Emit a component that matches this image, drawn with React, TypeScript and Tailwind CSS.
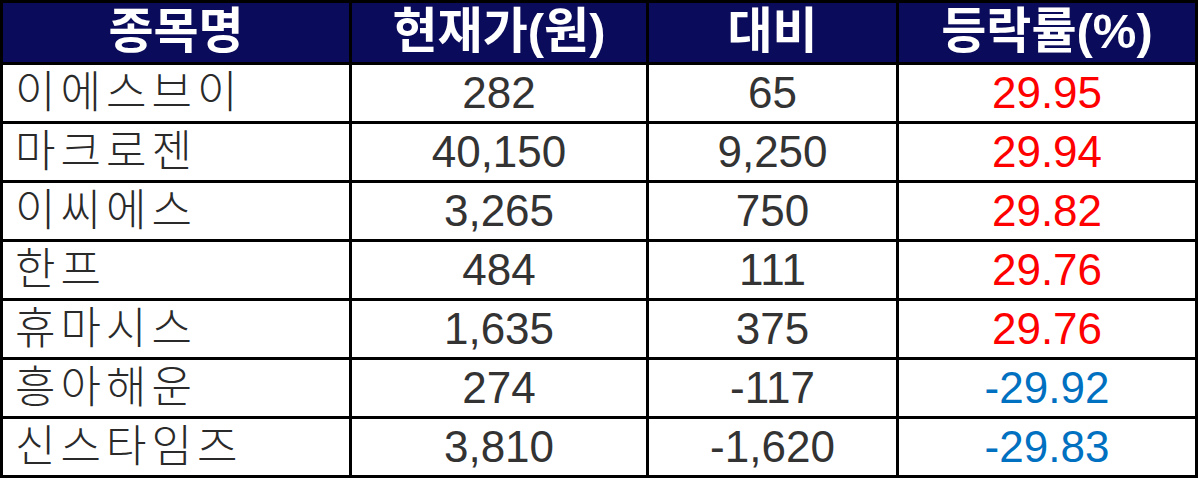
const ROWS = [
  { name: '이에스브이', price: '282', diff: '65', rate: '29.95' },
  { name: '마크로젠', price: '40,150', diff: '9,250', rate: '29.94' },
  { name: '이씨에스', price: '3,265', diff: '750', rate: '29.82' },
  { name: '한프', price: '484', diff: '111', rate: '29.76' },
  { name: '휴마시스', price: '1,635', diff: '375', rate: '29.76' },
  { name: '흥아해운', price: '274', diff: '-117', rate: '-29.92' },
  { name: '신스타임즈', price: '3,810', diff: '-1,620', rate: '-29.83' },
];

const HEADERS = ['종목명', '현재가(원)', '대비', '등락률(%)'];

export default function App() {
  return (
    <div className="w-[1200px] h-[480px] bg-white font-['Liberation_Sans','Noto_Sans_CJK_KR',sans-serif]">
      <div className="w-[1198px] bg-black p-[3px] grid grid-cols-[346px_294px_247px_296px] gap-[3px] auto-rows-[56px] [grid-template-rows:59px]">
        {/* Header */}
        {HEADERS.map((h) => (
          <div
            key={h}
            className="bg-[#0b0b5b] flex items-center justify-center text-white font-bold text-[49px] leading-none pb-[2px]"
          >
            {h}
          </div>
        ))}

        {/* Body */}
        {ROWS.map((r) => {
          const up = !r.rate.startsWith('-');
          return [
            <div key={r.name + 'n'} className="bg-white flex items-center pl-[12px] text-[44px] leading-none font-light text-[#2a2a2a] tracking-[5px]">
              {r.name}
            </div>,
            <div key={r.name + 'p'} className="bg-white flex items-center justify-center text-[44px] leading-none text-[#333333]">
              {r.price}
            </div>,
            <div key={r.name + 'd'} className="bg-white flex items-center justify-center text-[44px] leading-none text-[#333333]">
              {r.diff}
            </div>,
            <div
              key={r.name + 'r'}
              className={`bg-white flex items-center justify-center text-[44px] leading-none ${up ? 'text-[#ff0000]' : 'text-[#0070c0]'}`}
            >
              {r.rate}
            </div>,
          ];
        })}
      </div>
    </div>
  );
}
